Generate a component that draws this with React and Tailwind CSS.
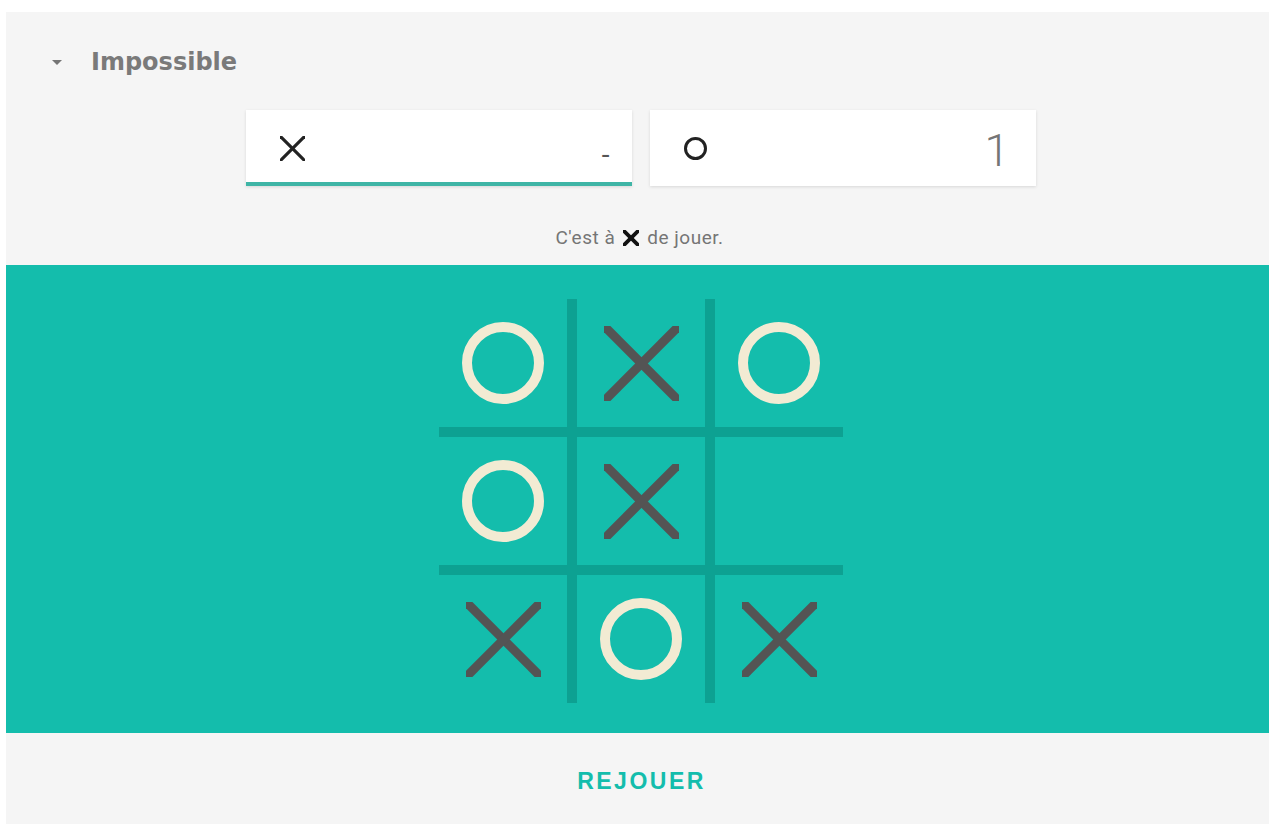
import { useState } from "react";

const Cross = ({ size = 75, stroke = 9, color = "#545454" }) => (
  <svg width={size} height={size} viewBox={`0 0 ${size} ${size}`}>
    <line x1="0" y1="0" x2={size} y2={size} stroke={color} strokeWidth={stroke} />
    <line x1={size} y1="0" x2="0" y2={size} stroke={color} strokeWidth={stroke} />
  </svg>
);

const Ring = ({ size = 82, stroke = 10, color = "#f2ebd3" }) => (
  <svg width={size} height={size} viewBox={`0 0 ${size} ${size}`}>
    <circle
      cx={size / 2}
      cy={size / 2}
      r={(size - stroke) / 2}
      fill="none"
      stroke={color}
      strokeWidth={stroke}
    />
  </svg>
);

const ScoreCard = ({ mark, score, active }) => (
  <div
    className={`relative w-[386px] h-[76px] bg-white shadow-[0_1px_3px_rgba(0,0,0,0.12)] flex items-center justify-between pl-[34px] ${
      score === "-" ? "pr-[22px]" : "pr-[26px]"
    }`}
  >
    {mark === "x" ? (
      <Cross size={25} stroke={3.2} color="#222" />
    ) : (
      <Ring size={23} stroke={3} color="#222" />
    )}
    {score === "-" ? (
      <span className="text-[28px] text-[#555] pt-[14px]">-</span>
    ) : (
      <span className="text-[45px] text-[#757575] font-light leading-none pt-[5px]">{score}</span>
    )}
    {active && <div className="absolute left-0 right-0 bottom-0 h-[4px] bg-[#3fb5a6]" />}
  </div>
);

const App = () => {
  const [board] = useState(["o", "x", "o", "o", "x", "", "x", "o", "x"]);

  return (
    <div className="min-h-screen bg-white pl-[6px] pt-[12px] font-['Roboto',sans-serif]">
      <div className="bg-[#f5f5f5] h-[812px] flex flex-col">
        <div className="pt-[36px] pl-[46px] h-[64px] flex items-center gap-[29px]">
          <div className="w-0 h-0 border-l-[5px] border-r-[5px] border-t-[5px] border-l-transparent border-r-transparent border-t-[#757575]" />
          <span className="font-['DejaVu_Sans',sans-serif] text-[24px] font-bold text-[#7a7a7a] leading-[28px]">
            Impossible
          </span>
        </div>

        <div className="mt-[34px] flex justify-center gap-[18px] pl-[6px]">
          <ScoreCard mark="x" score="-" active />
          <ScoreCard mark="o" score="1" />
        </div>

        <div className="mt-[42px] h-[20px] flex items-center justify-center gap-[8px] pl-[4px] text-[19px] tracking-[0.5px] text-[#757575]">
          <span>C'est à</span>
          <Cross size={16} stroke={3.8} color="#111" />
          <span>de jouer.</span>
        </div>

        <div className="mt-[17px] h-[468px] bg-[#14bdac] flex justify-center pt-[34px] pl-[7px]">
          <div className="grid grid-cols-3 gap-[10px] bg-[#0da192] w-[404px] h-[404px]">
            {board.map((cell, i) => (
              <div key={i} className="bg-[#14bdac] flex items-center justify-center">
                {cell === "x" && <Cross />}
                {cell === "o" && <Ring />}
              </div>
            ))}
          </div>
        </div>

        <div className="mt-[36px] flex justify-center pl-[8px]">
          <button className="font-['Liberation_Sans',sans-serif] text-[23px] font-bold text-[#14bdac] tracking-[2.5px] leading-[24px]">
            REJOUER
          </button>
        </div>
      </div>
    </div>
  );
};

export default App;
